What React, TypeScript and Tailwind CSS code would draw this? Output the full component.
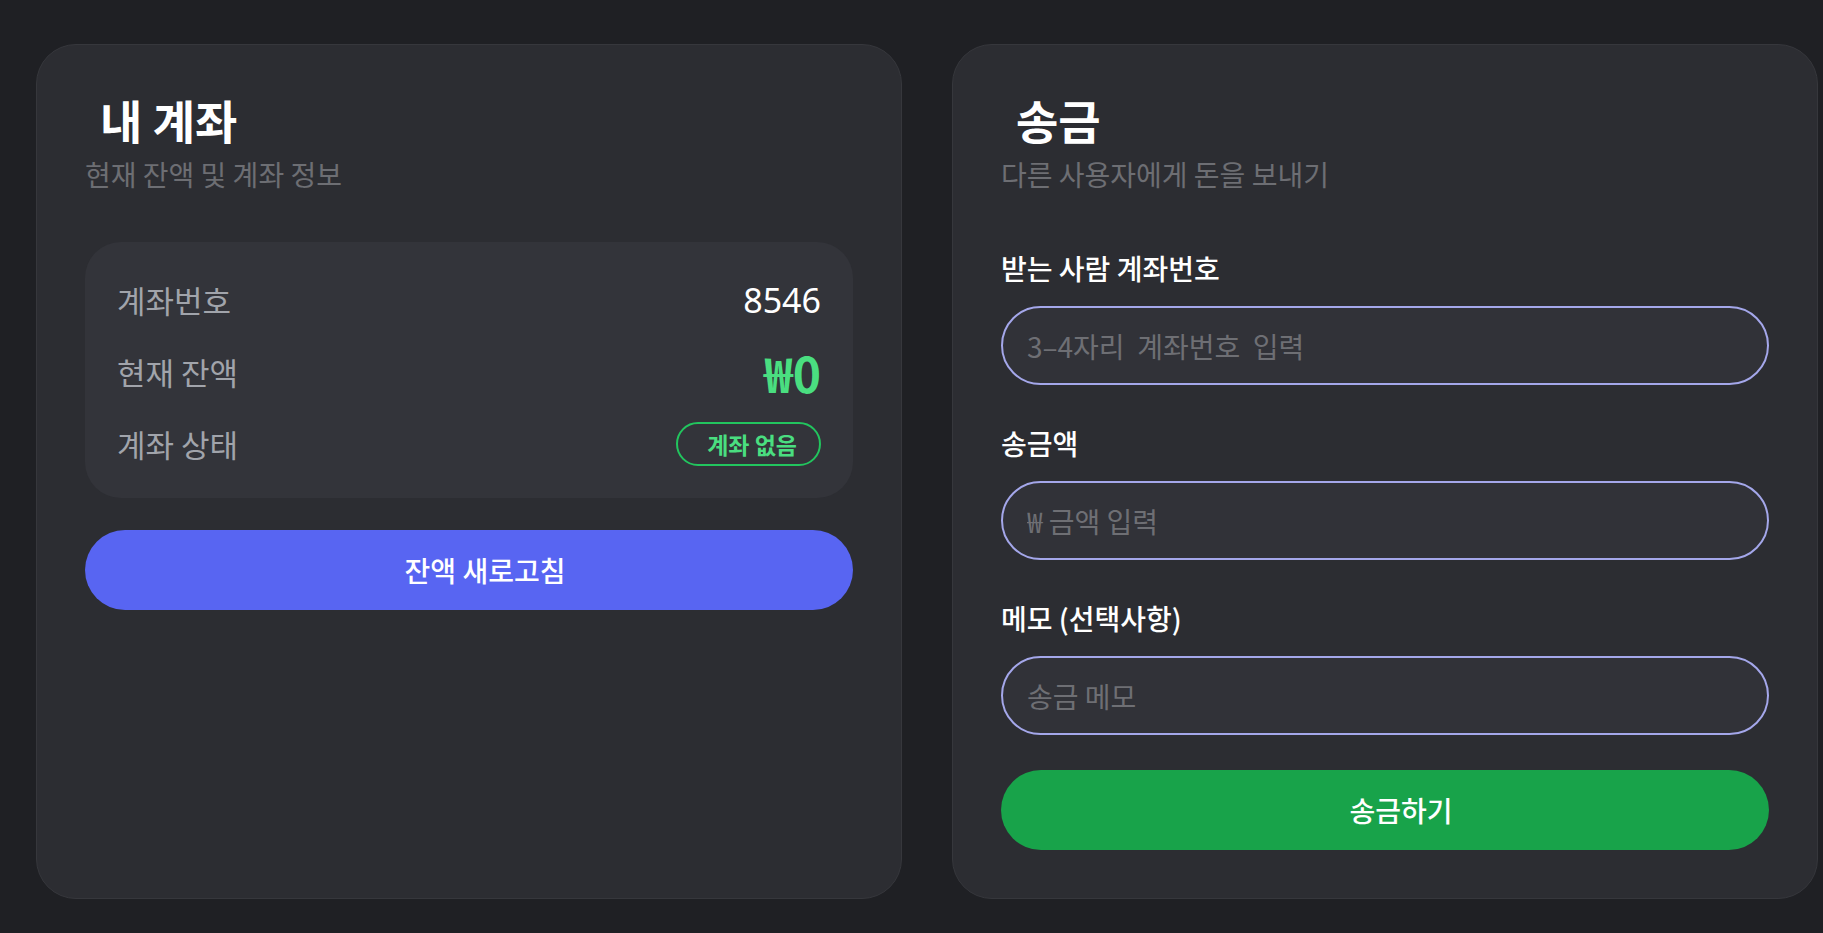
import { useState } from "react";

const FONT = { fontFamily: '"Noto Sans CJK KR", "Noto Sans", sans-serif' };

const InfoRow = ({ label, children }: { label: string; children: React.ReactNode }) => {
    return (
        <div className="h-[52px] flex items-center justify-between">
            <span className="text-[31px] text-[#a1a4ab]">{label}</span>
            {children}
        </div>
    );
};

const Field = ({
    label,
    placeholder,
    value,
    onChange,
}: {
    label: string;
    placeholder: string;
    value: string;
    onChange: (v: string) => void;
}) => {
    return (
        <div className="flex flex-col">
            <label className="text-[28px] font-medium text-white leading-[36px]">{label}</label>
            <input
                value={value}
                onChange={(ev) => onChange(ev.target.value)}
                placeholder={placeholder}
                className="mt-5 h-[79px] w-full rounded-full border-2 border-[#a4a7ea] bg-[#313238] px-6 text-[28px] text-white placeholder:text-[#6e6f74] outline-none"
                style={{ whiteSpace: "pre" }}
            />
        </div>
    );
};

const App = () => {
    const [account, setAccount] = useState("");
    const [amount, setAmount] = useState("");
    const [memo, setMemo] = useState("");

    return (
        <div className="min-h-[933px] bg-[#1f2024] pt-[44px] pl-[36px]" style={FONT}>
            <div className="flex items-stretch gap-[50px]">
                {/* 내 계좌 */}
                <section className="w-[866px] rounded-[40px] border border-[#36373c] bg-[#2c2d32] p-12">
                    <h1 className="ml-[15px] text-[46px] font-bold leading-[52px] text-white">내 계좌</h1>
                    <p className="mt-[9px] text-[28px] leading-[40px] text-[#6d6e73]">현재 잔액 및 계좌 정보</p>

                    <div className="mt-12 rounded-[36px] bg-[#33343a] px-8 pt-8 pb-7 flex flex-col gap-5">
                        <InfoRow label="계좌번호">
                            <span className="text-[34px] text-white" style={{ fontFamily: '"Noto Sans", sans-serif' }}>
                                8546
                            </span>
                        </InfoRow>
                        <InfoRow label="현재 잔액">
                            <span className="text-[48px] font-bold text-[#4ade80]">₩0</span>
                        </InfoRow>
                        <InfoRow label="계좌 상태">
                            <span className="h-[44px] rounded-full border-2 border-[#22c55e] pl-[29px] pr-[22px] flex items-center text-[23px] font-bold text-[#4ade80]">
                                계좌 없음
                            </span>
                        </InfoRow>
                    </div>

                    <button className="mt-8 h-20 w-full rounded-full bg-[#5865f2] pl-8 text-[28px] font-medium text-white">
                        잔액 새로고침
                    </button>
                </section>

                {/* 송금 */}
                <section className="w-[866px] rounded-[40px] border border-[#36373c] bg-[#2c2d32] p-12">
                    <h1 className="ml-[15px] text-[46px] font-bold leading-[52px] text-white">송금</h1>
                    <p className="mt-[9px] text-[28px] leading-[40px] text-[#6d6e73]">다른 사용자에게 돈을 보내기</p>

                    <div className="mt-14 flex flex-col gap-10">
                        <Field
                            label="받는 사람 계좌번호"
                            placeholder="3–4자리  계좌번호  입력"
                            value={account}
                            onChange={setAccount}
                        />
                        <Field label="송금액" placeholder="₩ 금액 입력" value={amount} onChange={setAmount} />
                        <Field label="메모 (선택사항)" placeholder="송금 메모" value={memo} onChange={setMemo} />
                    </div>

                    <button className="mt-[35px] h-20 w-full rounded-full bg-[#18a34a] pl-8 text-[28px] font-medium text-white">
                        송금하기
                    </button>
                </section>
            </div>
        </div>
    );
};

export default App;
